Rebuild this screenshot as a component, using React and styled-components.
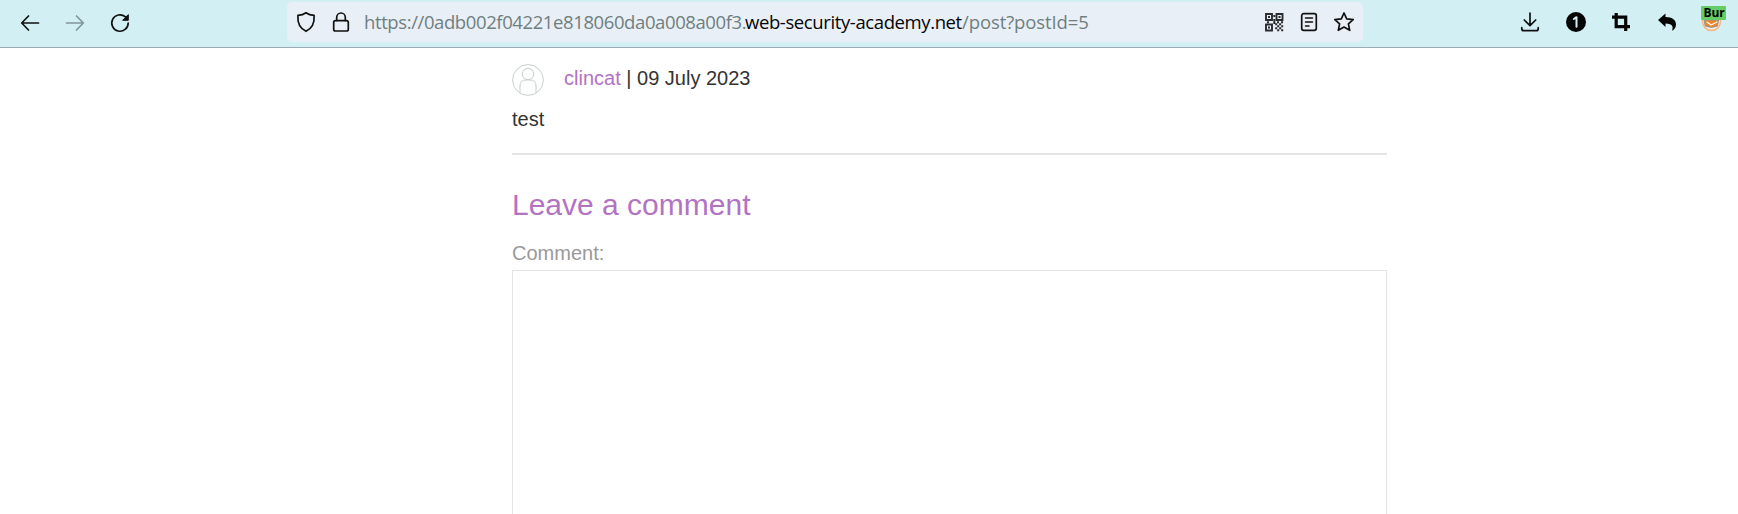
import React from 'react';
import styled, { createGlobalStyle } from 'styled-components';

const Global = createGlobalStyle`
  * { box-sizing: border-box; }
  body { margin: 0; background: #fff; overflow: hidden; }
`;
const Page = styled.div`
  height: 514px;
  overflow: hidden;
  font-family: "Liberation Sans", Arial, sans-serif;
`;
const Toolbar = styled.header`
  display: flex;
  align-items: flex-start;
  height: 48px;
  background: #d2eff3;
  border-bottom: 1px solid #9aabb3;
`;
const NavGroup = styled.nav`
  display: flex;
  gap: 21px;
  width: 287px;
  padding: 11px 0 0 18px;
`;
const Icon = styled.svg`
  display: block;
  flex: none;
  width: 24px;
  height: 24px;
  fill: none;
  stroke: ${p => p.$color || '#111'};
  stroke-width: ${p => p.$weight || 1.7};
  stroke-linecap: round;
  stroke-linejoin: round;
`;
const AddressBar = styled.div`
  display: flex;
  align-items: center;
  width: 1076px;
  height: 40px;
  margin-top: 2px;
  padding: 0 7px;
  border-radius: 5px;
  background: #e9eff6;
`;
const Pair = styled.div`
  display: flex;
  gap: 11px;
`;
const Url = styled.div`
  flex: 1;
  display: flex;
  padding-left: 11px;
  font: 18.5px/26px "Open Sans", "Noto Sans", sans-serif;
  color: #6f7f80;
  white-space: pre;
`;
const UrlPart = styled.span`
  width: ${p => p.$w}px;
  letter-spacing: ${p => p.$track}px;
  color: ${p => (p.$host ? '#050505' : 'inherit')};
`;
const Extensions = styled.div`
  display: flex;
  gap: 21.4px;
  margin-left: auto;
  padding: 10px 13px 0 0;
`;
const Burp = styled.div`
  position: relative;
  width: 25px;
  height: 24px;
`;
const BurpBadge = styled.span`
  position: absolute;
  left: 1px;
  top: -4px;
  width: 25px;
  height: 14px;
  padding-left: 2.5px;
  border-radius: 1px;
  background: #66cc66;
  color: #000;
  font: 700 12px/13px "Open Sans", sans-serif;
  letter-spacing: -0.1px;
`;
const Content = styled.main`
  width: 875px;
  margin-left: 512px;
  padding-top: 16px;
`;
const Author = styled.div`
  display: flex;
  gap: 20px;
  height: 32px;
  font-size: 20px;
  line-height: 28px;
  color: #333332;
`;
const Name = styled.a`
  color: #b472c4;
`;
const Body = styled.p`
  margin: 9px 0 0;
  font-size: 20px;
  line-height: 28px;
  color: #333332;
`;
const Rule = styled.hr`
  height: 2px;
  margin: 20px 0 0;
  border: 0;
  background: #e4e4e4;
`;
const Heading = styled.h2`
  margin: 33px 0 0;
  font-size: 30px;
  line-height: 34px;
  font-weight: 400;
  color: #b472c4;
`;
const Label = styled.label`
  display: block;
  margin-top: 19px;
  font-size: 20px;
  line-height: 24px;
  color: #999;
`;
const Field = styled.textarea`
  display: block;
  width: 100%;
  height: 300px;
  margin-top: 5px;
  border: 1px solid #e4e4e4;
  outline: 0;
  resize: none;
  background: #fff;
`;

const QrCode = () => (
  <Icon viewBox="0 0 24 24" $weight={1.9} $color="#2a2c2e">
    <path strokeLinejoin="miter" d="M4 4h6v6H4zM14.500 4h6v6h-6zM4 14.500h6v6H4z" />
    <g fill="#2a2c2e" stroke="none">
      <path d="M6 6h2v2H6zM16.500 6h2v2h-2zM6 16.500h2v2H6zM11.300 5h2v2h-2zM11.300 9h2v5h-2zM5 11.300h2v2H5zM15 11.300h2v2h-2zM19 11.300h2v2h-2zM13.200 13.200h2v2h-2zM17.100 13.200h2v2h-2zM15.200 15.200h2v2h-2zM19.200 15.200h2v2h-2zM13.200 17.200h2v2h-2zM17.200 17.200h2v2h-2zM15.200 19.200h2v2h-2zM19.200 19.200h2v2h-2z" />
    </g>
  </Icon>
);

export default function App() {
  return (
    <Page>
      <Global />
      <Toolbar>
        <NavGroup>
          <Icon viewBox="0 0 24 24"><path d="M20.5 12H4M10.5 5L3.7 12l6.8 7" /></Icon>
          <Icon viewBox="0 0 24 24" $color="#81979a"><path d="M3.5 12H20M13.5 5l6.8 7-6.8 7" /></Icon>
          <Icon viewBox="0 0 24 24">
            <path d="M20.2 12a8.2 8.2 0 1 1-3-6.3L19 7.5" />
            <path d="M20.3 4v5.3H15z" fill="#111" strokeWidth="1" />
          </Icon>
        </NavGroup>
        <AddressBar>
          <Pair>
            <Icon viewBox="0 0 24 24">
              <path d="M12 2.8c2.5 1.8 5.2 2.4 8.1 2.6.5 7.2-1.8 13-8.1 15.9C5.700 18.400 3.400 12.600 3.900 5.400 6.800 5.200 9.500 4.600 12 2.800z" />
            </Icon>
            <Icon viewBox="0 0 24 24">
              <rect x="4.700" y="10.700" width="14.600" height="10.300" rx="1.800" />
              <path d="M7.700 10.500V7.300a4.300 4.300 0 0 1 8.600 0v3.200" />
            </Icon>
          </Pair>
          <Url>
            <UrlPart $w={381} $track={-0.4}>https://0adb002f04221e818060da0a008a00f3.</UrlPart>
            <UrlPart $w={217} $track={-0.39} $host>web-security-academy.net</UrlPart>
            <UrlPart $w={130} $track={-0.1}>/post?postId=5</UrlPart>
          </Url>
          <Pair>
            <QrCode />
            <Icon viewBox="0 0 24 24">
              <rect x="4.700" y="3.700" width="14.600" height="16.600" rx="2" />
              <path d="M8.500 8h7M8.500 12h7M8.500 16h3.500" strokeWidth="1.500" />
            </Icon>
            <Icon viewBox="0 0 24 24">
              <path d="M12 3l2.700 5.900 6.500.7-4.800 4.300 1.300 6.400-5.700-3.200-5.700 3.200 1.300-6.400-4.800-4.300 6.500-.7z" />
            </Icon>
          </Pair>
        </AddressBar>
        <Extensions>
          <Icon viewBox="0 0 24 24">
            <path d="M12 3v12.500M6.300 10l5.700 5.700 5.700-5.700M3.800 17.500v1.200a2 2 0 0 0 2 2h12.400a2 2 0 0 0 2-2v-1.200" />
          </Icon>
          <Icon viewBox="0 0 24 24">
            <circle cx="12" cy="12" r="10" fill="#050505" stroke="none" />
            <path d="M9.800 9l2.700-1.800v9.600" stroke="#d2eff3" strokeWidth="2" />
          </Icon>
          <Icon viewBox="0 0 24 24" $weight={3.2} $color="#050505">
            <path strokeLinecap="butt" strokeLinejoin="miter" d="M7.200 3v13.700H21M3 7.200h13.700V21" />
          </Icon>
          <Icon viewBox="0 0 24 24">
            <path stroke="none" fill="#050505" d="M3 10l7.500-6.500V7c7.200.2 10.500 3 10.500 7.500 0 2.800-1.500 5-4 6.300 1.500-4.300.8-7.200-6.500-7.400v3.500z" />
          </Icon>
          <Burp>
            <Icon viewBox="0 0 24 24" $weight={1.5}>
              <circle cx="11.500" cy="11.500" r="9" fill="#f7efe8" stroke="#f0b787" />
              <path d="M4.500 10h14l-1 6-6 1.500-6-1.500z" fill="#ef8428" stroke="#8e928f" strokeWidth="1" />
              <path d="M7 12l4 3 6-3" stroke="#fff" strokeWidth="1.200" />
            </Icon>
            <BurpBadge>Bur</BurpBadge>
          </Burp>
        </Extensions>
      </Toolbar>
      <Content>
        <Author>
          <svg width="32" height="32" viewBox="0 0 32 32" fill="none" stroke="#c8cdcd">
            <circle cx="16" cy="16" r="15.400" />
            <circle cx="16" cy="10" r="5.700" />
            <path d="M8 29.300V22q0-6 6-6h4q6 0 6 6v7.300" />
          </svg>
          <span><Name>clincat</Name> | 09 July 2023</span>
        </Author>
        <Body>test</Body>
        <Rule />
        <Heading>Leave a comment</Heading>
        <Label htmlFor="comment">Comment:</Label>
        <Field id="comment" />
      </Content>
    </Page>
  );
}
